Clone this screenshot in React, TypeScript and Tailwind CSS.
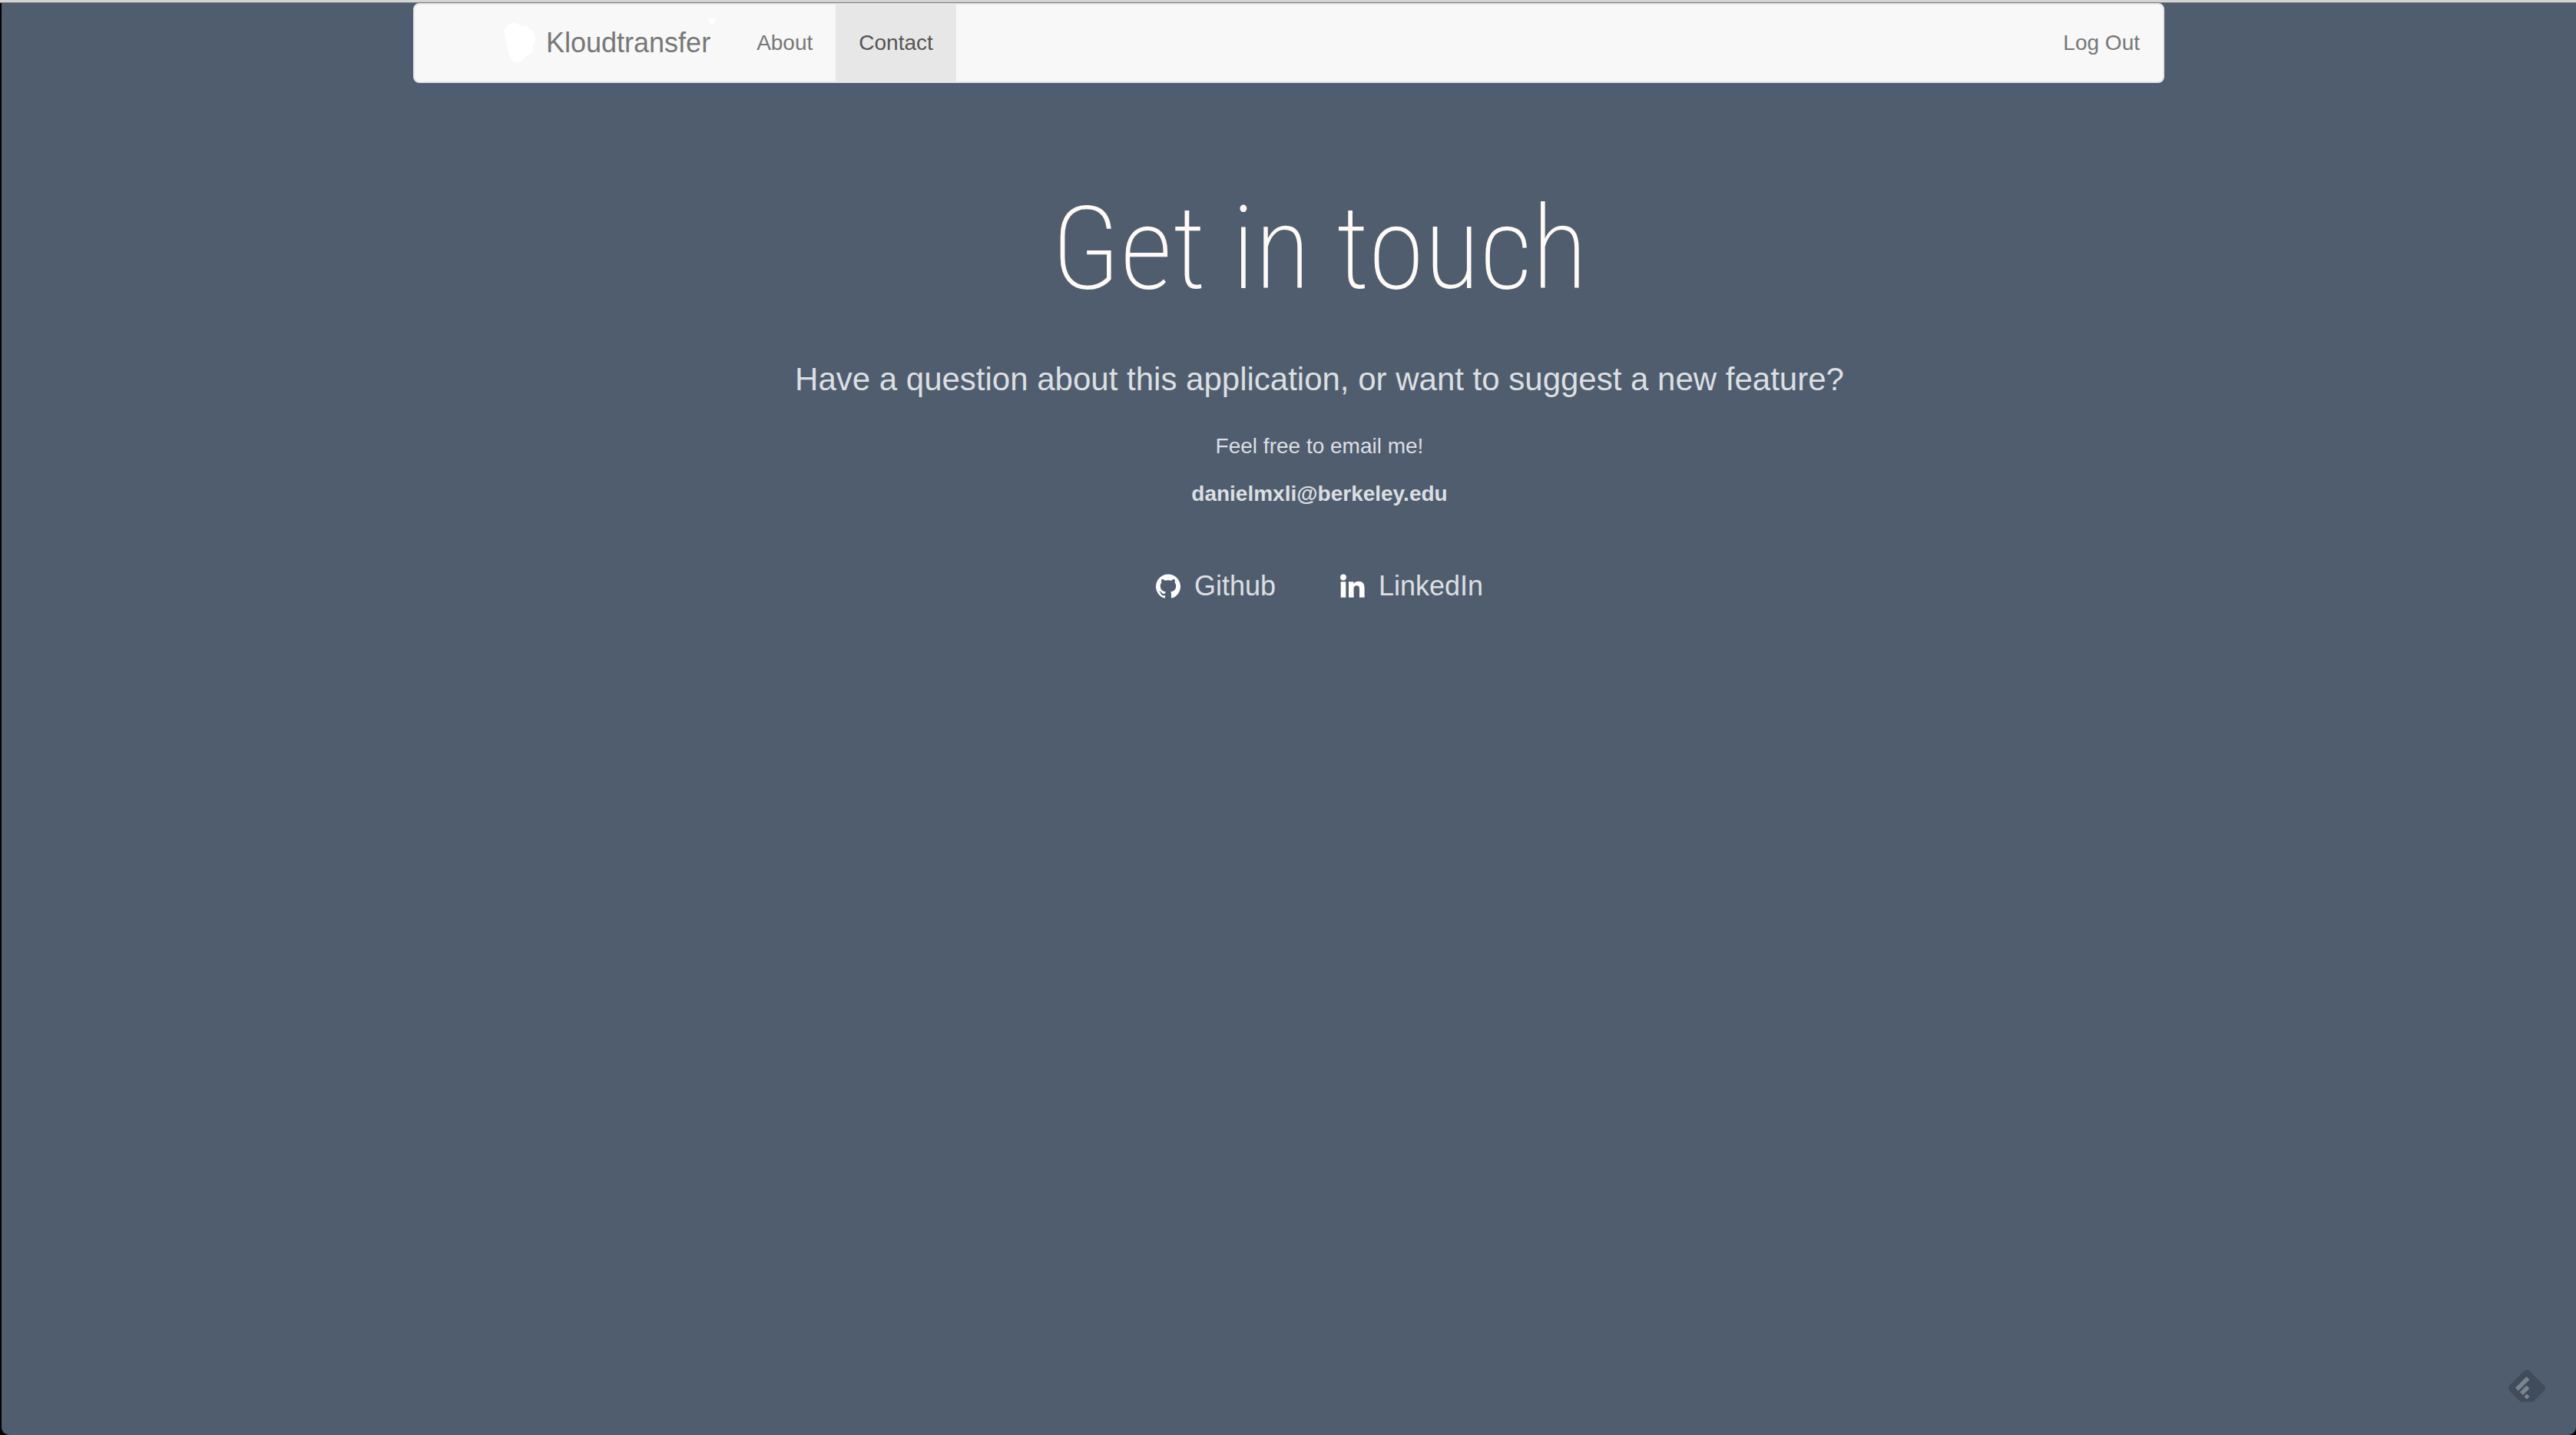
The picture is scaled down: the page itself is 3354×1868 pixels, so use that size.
import { SiGithub } from "react-icons/si";

function BrandMark() {
  return (
    <svg className="h-13 w-10 shrink-0" viewBox="0 0 40 52" fill="#fff" aria-hidden="true">
      <path d="M0 14C0 5 5 0 12 0c4 0 7 2 10 5 2-1 5-1 7 0 7 2 11 9 11 16 0 4-1 7-4 9 2 6 0 10-6 12-1 0-2 0-3 1-2 5-5 8-10 8-6 0-10-4-12-13L1 20Z" />
    </svg>
  );
}

function LinkedInMark() {
  return (
    <svg className="h-8 w-8" viewBox="0 0 32 32" fill="#fff" aria-hidden="true">
      <circle cx="4" cy="4.500" r="3.900" />
      <path d="M.7 10.200h6.600v20.500H.7ZM11 10.200h6.400V13c1-1.900 3.200-3.300 6.500-3.300 6.300 0 7.700 4 7.700 9.700v11.300H25v-10c0-2.400-.1-5.400-3.400-5.400-3.400 0-4 2.500-4 5.200v10.200H11Z" />
    </svg>
  );
}

function NavBar() {
  return (
    <nav className="mx-auto flex w-full max-w-[2280px] items-stretch justify-between rounded-lg border-2 border-[#e7e7e7] bg-[#f8f8f8] text-[28px] leading-10 text-[#777]">
      <div className="flex">
        <a href="#home" className="relative flex items-center gap-[14px] pr-[30px] pl-[117px] text-[36px]">
          <BrandMark />
          Kloudtransfer
          <span className="absolute top-[18px] right-6 h-2 w-2 rounded-full bg-white" />
        </a>
        <a href="#about" className="px-[30px] py-[30px]">
          About
        </a>
        <a href="#contact" aria-current="page" className="bg-[#e7e7e7] px-[30px] py-[30px] text-[#555]">
          Contact
        </a>
      </div>
      <a href="#logout" className="px-[30px] py-[30px]">
        Log Out
      </a>
    </nav>
  );
}

function ReaderBadge() {
  return (
    <button type="button" aria-label="Add to reader" className="absolute right-10 bottom-[43px] h-[42px] w-12">
      <svg className="h-full w-full" viewBox="0 0 48 42">
        <path
          d="M20.500 1.500Q24-1.500 27.500 1.500L46.500 20.500Q49.500 24 46.500 27.500L34.500 39.500Q32 42 29 42H19Q16 42 13.500 39.500L1.500 27.500Q-1.500 24 1.500 20.500Z"
          fill="#404b5b"
        />
        <g stroke="#7b8592" strokeWidth="5.500">
          <path d="M11 25.500 25.500 11" />
          <path d="M17 31 25.500 22.500" />
        </g>
        <path d="m24 32 3 3-3 3-3-3Z" fill="#7b8592" stroke="#7b8592" strokeWidth="1" strokeLinejoin="round" />
      </svg>
    </button>
  );
}

export default function App() {
  return (
    <div className="flex min-h-screen flex-col bg-black font-['Liberation_Sans',Arial,sans-serif]">
      <div className="h-1 border-b border-[#777] bg-[#d4d4d4]" />
      <div className="relative ml-0.5 flex-1 rounded-b-[10px] bg-[#505d6e]">
        <NavBar />
        <main className="flex flex-col items-center pl-20 text-center text-[28px] leading-10 text-[#dcdfe2]">
          <h1 className="mt-24 font-['Roboto_Condensed','Roboto',sans-serif] text-[150px] leading-[240px] font-extralight whitespace-nowrap text-[#fffaf5]">
            Get in touch
          </h1>
          <p className="mt-[27px] text-[42px] leading-[46px]">
            Have a question about this application, or want to suggest a new feature?
          </p>
          <p className="mt-11">Feel free to email me!</p>
          <p className="mt-[22px] font-bold">danielmxli@berkeley.edu</p>
          <div className="mt-20 flex gap-[84px] text-[36px]">
            <a href="#github" className="flex items-center gap-[18px]">
              <SiGithub className="h-8 w-8 text-white" />
              Github
            </a>
            <a href="#linkedin" className="flex items-center gap-[18px]">
              <LinkedInMark />
              LinkedIn
            </a>
          </div>
        </main>
        <ReaderBadge />
      </div>
    </div>
  );
}
